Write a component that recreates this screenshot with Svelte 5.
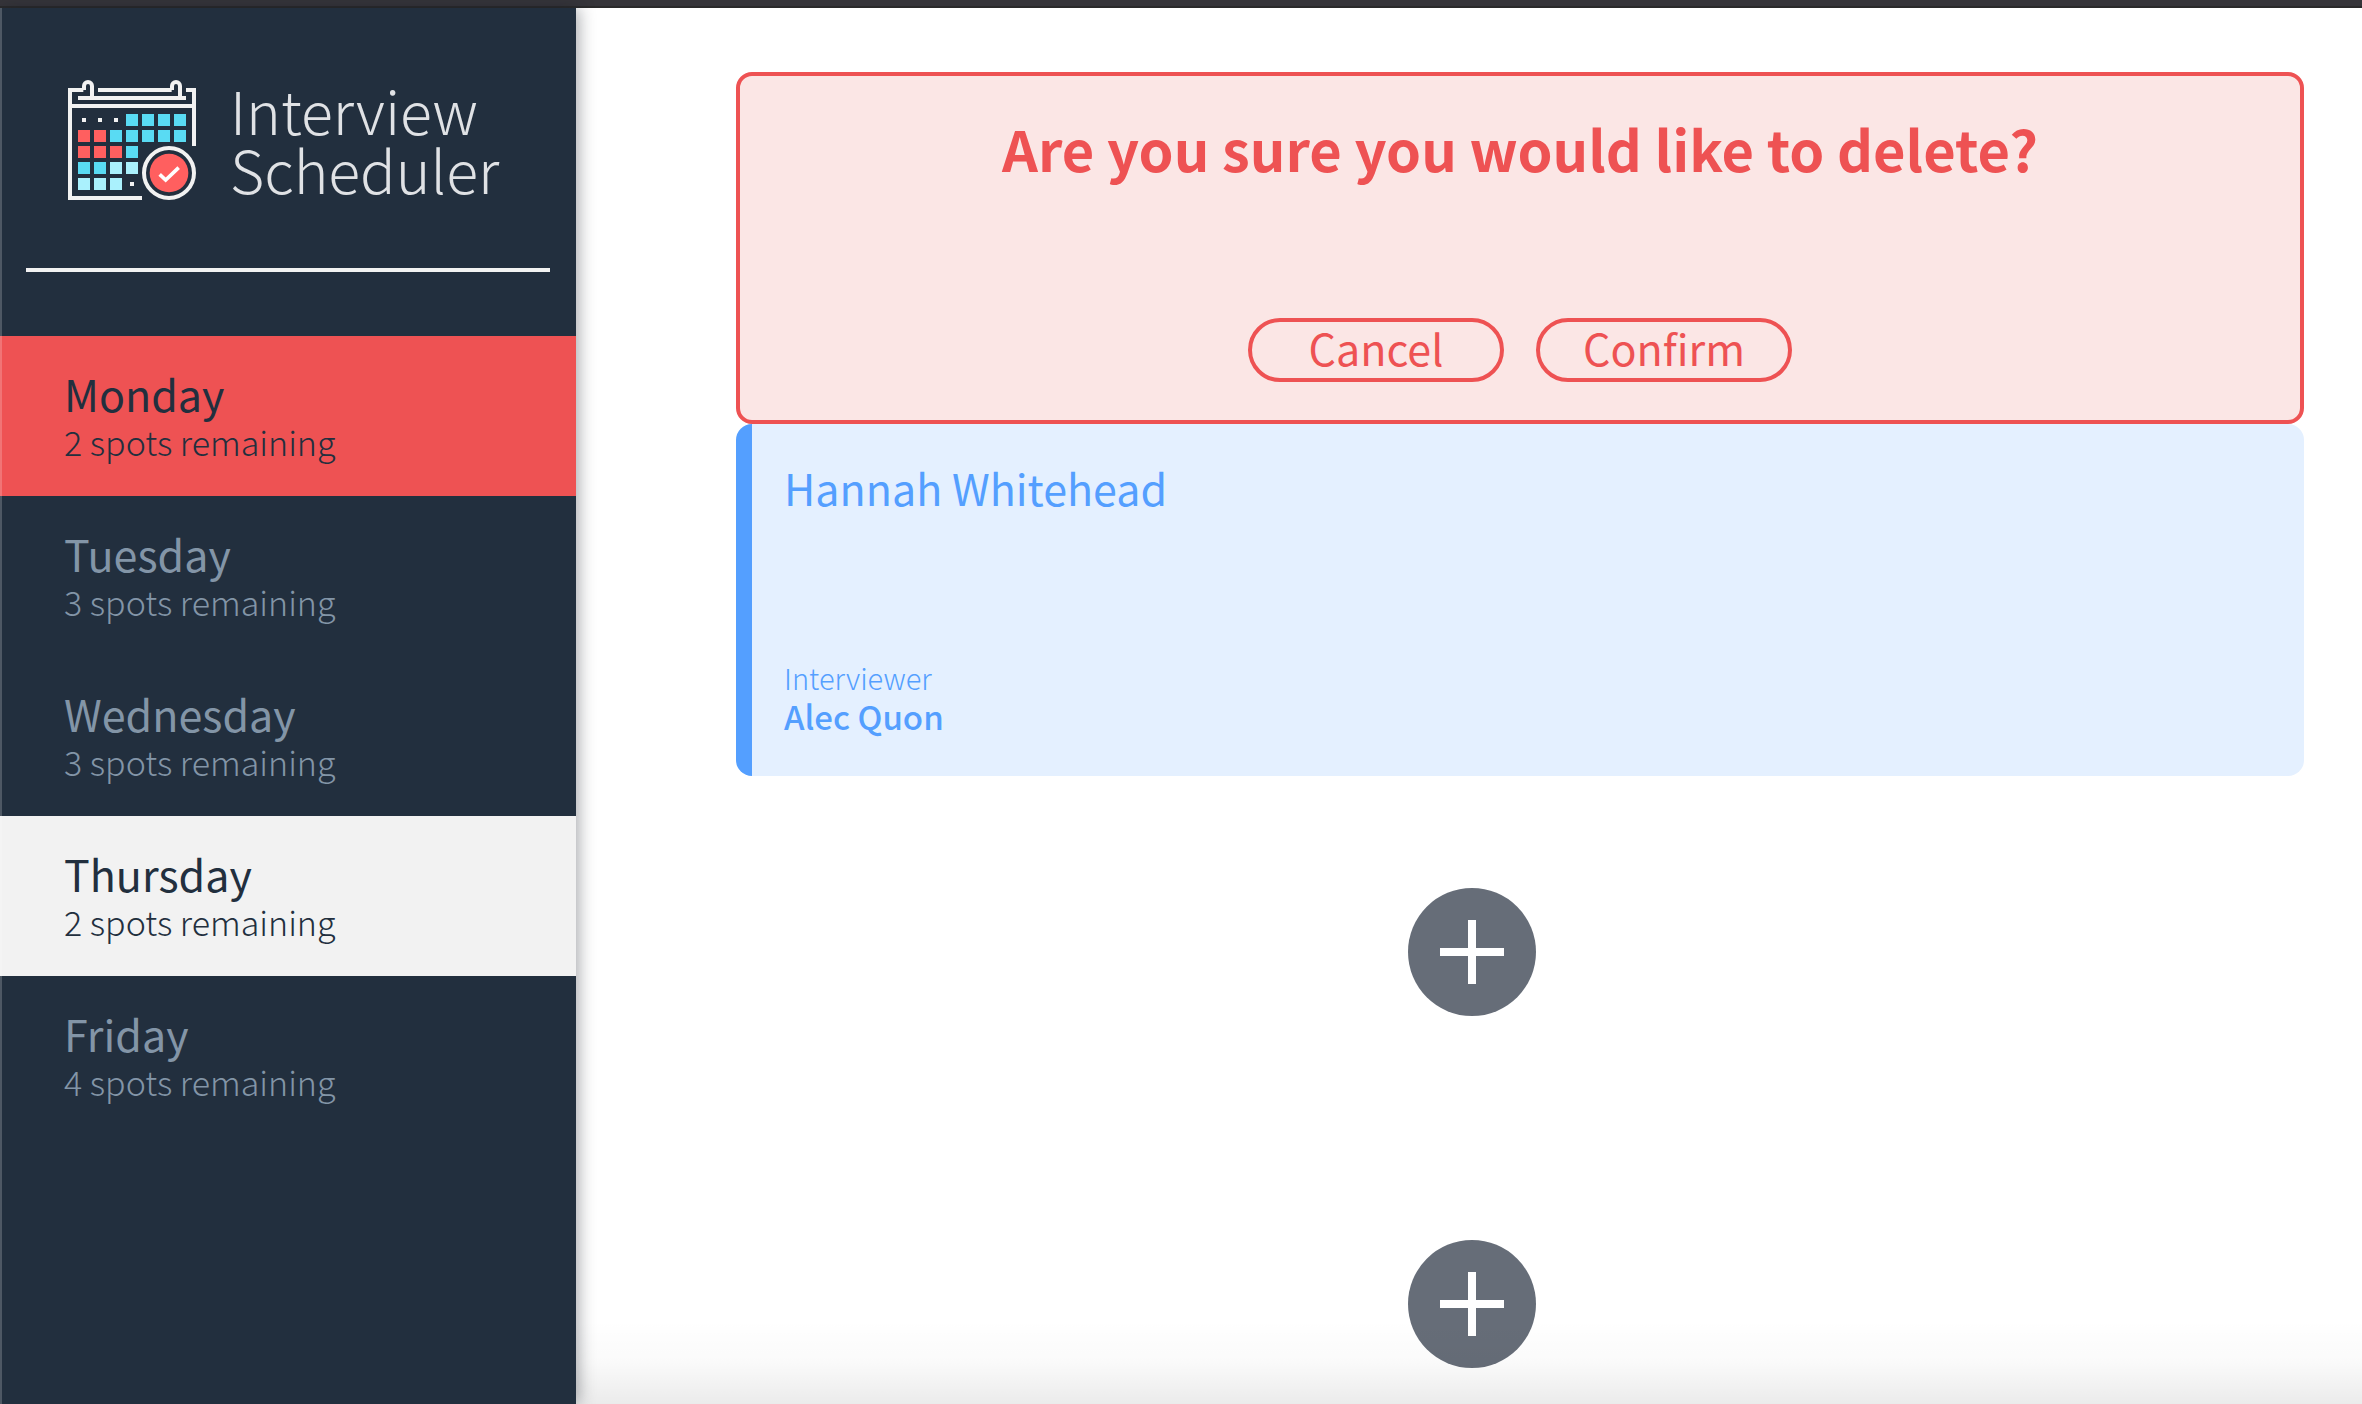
<script>
  const days = [
    { name: 'Monday', spots: 2, state: 'selected' },
    { name: 'Tuesday', spots: 3, state: '' },
    { name: 'Wednesday', spots: 3, state: '' },
    { name: 'Thursday', spots: 2, state: 'hovered' },
    { name: 'Friday', spots: 4, state: '' }
  ];

  // Calendar squares: column, row and colour of each day cell
  const red = '#ff5f5f';
  const cyan = '#59dbf3';
  const pale = '#aaf1fd';
  const grid = [
    [null, null, null, cyan, cyan, cyan, cyan],
    [red, red, cyan, cyan, cyan, cyan, cyan],
    [red, red, red, cyan],
    [cyan, cyan, pale, pale],
    [pale, pale, pale, null]
  ];
  const cells = grid.flatMap((row, r) =>
    row.map((fill, c) => ({ fill, x: 114 + c * 48, y: 162 + r * 48 }))
  );
</script>

<div class="page">
  <div class="chrome"></div>
  <div class="layout">
    <aside class="sidebar">
      <div class="logo">
        <svg class="calendar" viewBox="84 60 384 366" aria-hidden="true">
          <g fill="none" stroke="#f2f2f2" stroke-width="12">
            <path d="M130 90H90V414H306" />
            <path d="M438 90H462V258" />
            <path d="M174 90H395" />
            <path d="M114 114H438" />
            <path d="M90 138H462" />
            <path d="M132 90V78a12 12 0 0 1 24 0V114" />
            <path d="M396 90V78a12 12 0 0 1 24 0V114" />
            <circle cx="387" cy="339" r="75" />
          </g>
          {#each cells as cell}
            {#if cell.fill}
              <rect x={cell.x} y={cell.y} width="36" height="36" fill={cell.fill} />
            {:else}
              <rect x={cell.x + 12} y={cell.y + 12} width="12" height="12" fill="#f2f2f2" />
            {/if}
          {/each}
          <circle cx="387" cy="339" r="58" fill="#ff5f5f" />
          <path d="M359 343L377 360L416 323" fill="none" stroke="#fff" stroke-width="11" />
        </svg>
        <div class="wordmark">Interview<br />Scheduler</div>
      </div>
      <hr class="rule" />
      <nav class="days">
        {#each days as day}
          <button class="day {day.state}" type="button">
            <span class="name">{day.name}</span>
            <span class="spots">{day.spots} spots remaining</span>
          </button>
        {/each}
      </nav>
    </aside>

    <main class="schedule">
      <section class="card confirm">
        <h1>Are you sure you would like to delete?</h1>
        <div class="actions">
          <button class="pill" type="button">Cancel</button>
          <button class="pill" type="button">Confirm</button>
        </div>
      </section>

      <article class="card show">
        <h2>Hannah Whitehead</h2>
        <div>
          <h4>Interviewer</h4>
          <h3>Alec Quon</h3>
        </div>
      </article>

      {#each [1, 2] as slot}
        <div class="empty">
          <button class="add" type="button" aria-label="Add appointment">
            <svg viewBox="0 0 128 128" aria-hidden="true">
              <circle cx="64" cy="64" r="64" fill="#666d78" />
              <path d="M64 32V96M32 64H96" stroke="#fff" stroke-width="8" />
            </svg>
          </button>
        </div>
      {/each}
    </main>
  </div>
  <div class="fade"></div>
</div>

<style>
  :global(body) {
    margin: 0;
  }
  .page {
    position: relative;
    display: flex;
    flex-direction: column;
    height: 100vh;
    overflow: hidden;
    background: #fff;
    font-family: 'Noto Sans CJK SC', 'Noto Sans', sans-serif;
  }
  h1, h2, h3, h4 {
    margin: 0;
  }
  button {
    font-family: inherit;
    cursor: pointer;
  }
  .chrome {
    flex: none;
    height: 6px;
    background: #36353a;
    border-bottom: 2px solid #2a2a2b;
  }
  .layout {
    flex: 1;
    display: flex;
    min-height: 0;
  }
  .sidebar {
    position: relative;
    flex: none;
    width: 576px;
    background: #222f3e;
    box-shadow: 2px 0 16px rgba(20, 26, 34, 0.4);
  }
  .sidebar::before {
    content: '';
    position: absolute;
    inset: 0 auto 0 0;
    width: 2px;
    background: rgba(255, 255, 255, 0.2);
    z-index: 1;
  }
  .logo {
    display: flex;
    gap: 34px;
    height: 188px;
    padding: 72px 0 0 68px;
  }
  .calendar {
    flex: none;
    width: 128px;
    height: 122px;
  }
  .wordmark {
    color: #e0e2e5;
    font-size: 59px;
    font-weight: 200;
    line-height: 59px;
  }
  .rule {
    height: 4px;
    margin: 0 26px 64px;
    border: 0;
    background: #f2f2f2;
  }
  .days {
    display: flex;
    flex-direction: column;
  }
  .day {
    display: flex;
    flex-direction: column;
    padding: 34px 64px 28px;
    border: 0;
    background: none;
    color: #8395a7;
    text-align: left;
  }
  .name {
    font-size: 43px;
    font-weight: 400;
    line-height: 46px;
  }
  .spots {
    font-size: 34px;
    font-weight: 300;
    line-height: 52px;
  }
  .selected {
    background: #ee5253;
    color: #222f3e;
  }
  .hovered {
    background: #f2f2f2;
    color: #222f3e;
  }
  .schedule {
    flex: 1;
    min-width: 0;
    padding: 64px 58px 0 160px;
  }
  .card {
    display: flex;
    flex-direction: column;
    justify-content: space-between;
    box-sizing: border-box;
    min-height: 352px;
    border-radius: 16px;
  }
  .confirm {
    align-items: center;
    padding: 40px 32px 38px;
    border: 4px solid #ee5253;
    background: #fbe6e5;
    color: #ee5253;
  }
  h1 {
    font-size: 56px;
    font-weight: 700;
    line-height: 64px;
  }
  .actions {
    display: flex;
    gap: 32px;
  }
  .pill {
    width: 256px;
    height: 64px;
    padding: 0 0 6px;
    border: 4px solid #ee5253;
    border-radius: 32px;
    background: none;
    color: #ee5253;
    font-size: 43px;
    line-height: 50px;
  }
  .show {
    padding: 40px 32px;
    border-left: 16px solid #549fff;
    background: #e4f0ff;
    color: #549fff;
  }
  h2 {
    font-size: 43px;
    font-weight: 400;
    line-height: 46px;
  }
  h4 {
    font-size: 29px;
    font-weight: 300;
    line-height: 38px;
  }
  h3 {
    font-size: 33px;
    font-weight: 500;
    line-height: 40px;
  }
  .empty {
    display: flex;
    align-items: center;
    justify-content: center;
    height: 352px;
    padding-right: 96px;
  }
  .add {
    width: 128px;
    height: 128px;
    padding: 0;
    border: 0;
    border-radius: 50%;
    background: none;
  }
  .add svg {
    display: block;
  }
  .fade {
    position: absolute;
    inset: auto 0 0 576px;
    height: 84px;
    background: linear-gradient(rgba(0, 0, 0, 0), rgba(0, 0, 0, 0.02) 50%, rgba(0, 0, 0, 0.08));
    pointer-events: none;
  }
</style>
